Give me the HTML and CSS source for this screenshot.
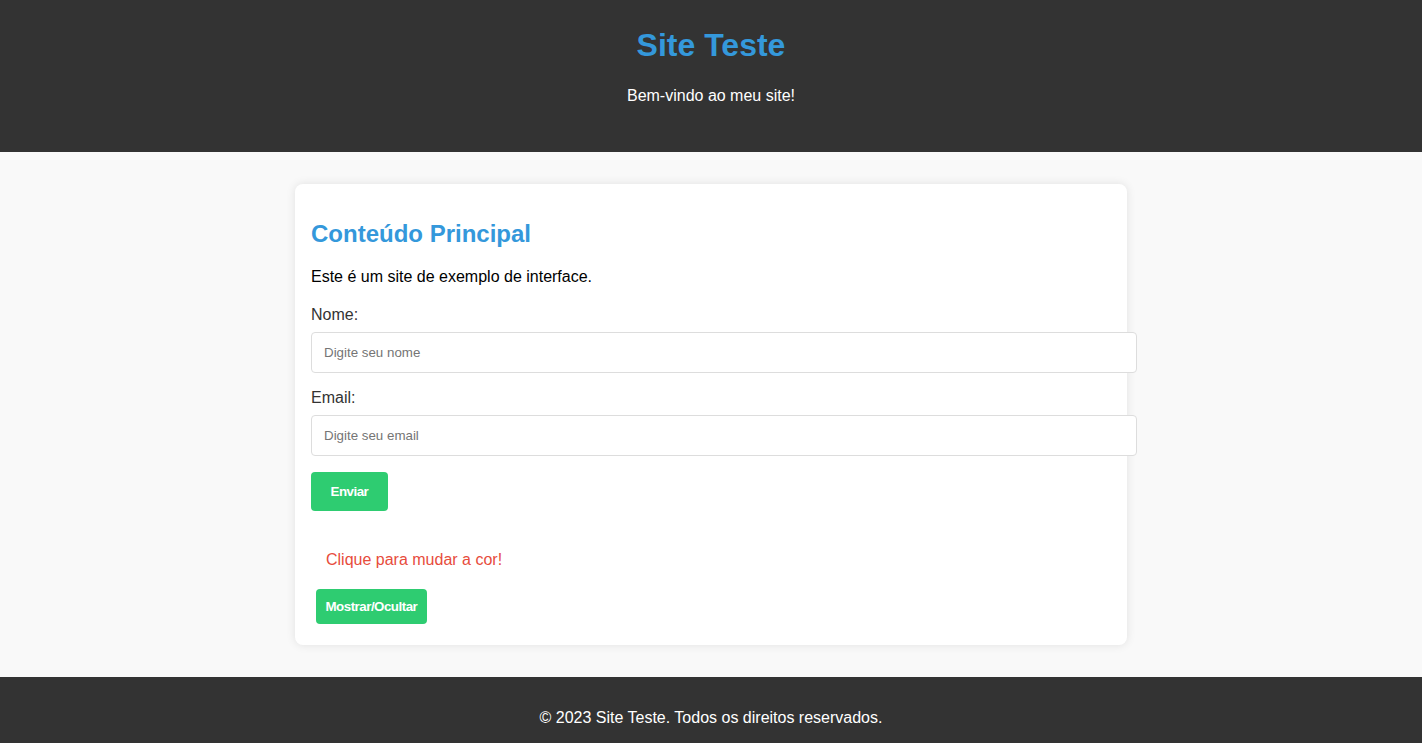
FILE: index.html
```html
<!DOCTYPE html>
<html lang="pt-BR">
<head>
<meta charset="UTF-8">
<title>Site Teste</title>
<link rel="stylesheet" href="styles.css">
</head>
<body>
<header class="site-header">
  <h1 class="site-title">Site Teste</h1>
  <p class="site-subtitle">Bem-vindo ao meu site!</p>
</header>
<main class="site-main">
  <section class="card">
    <h2 class="card-title">Conteúdo Principal</h2>
    <p class="card-text">Este é um site de exemplo de interface.</p>
    <form class="form">
      <label class="form-label" for="nome">Nome:</label>
      <input class="form-input" type="text" id="nome" placeholder="Digite seu nome">
      <label class="form-label" for="email">Email:</label>
      <input class="form-input" type="email" id="email" placeholder="Digite seu email">
      <button class="btn btn-submit" type="button">Enviar</button>
    </form>
    <div class="interactive">
      <p class="color-text">Clique para mudar a cor!</p>
      <button class="btn btn-toggle" type="button">Mostrar/Ocultar</button>
    </div>
  </section>
</main>
<footer class="site-footer">
  <p class="footer-text">© 2023 Site Teste. Todos os direitos reservados.</p>
</footer>
</body>
</html>
```
FILE: styles.css
```css
html, body {
  margin: 0;
  padding: 0;
}
body {
  font-family: "Liberation Sans", Arial, sans-serif;
  font-size: 16px;
  color: #000;
  background: #f9f9f9;
}
.site-header {
  background: #333;
  color: #fff;
  text-align: center;
  padding: 17px 0 31px;
}
.site-title {
  color: #3498db;
  font-size: 32px;
  margin: 10px 0 23px;
}
.site-subtitle {
  margin: 16px 0;
}
.site-main {
  padding: 32px 0;
  background: #f9f9f9;
}
.card {
  max-width: 800px;
  margin: 0 auto;
  padding: 16px;
  background: #fff;
  border-radius: 8px;
  box-shadow: 0 0 10px rgba(0, 0, 0, 0.1);
}
.card-title {
  color: #3498db;
  font-size: 24px;
  margin: 19.92px 0;
}
.card-text {
  margin: 16px 0;
}
.form {
  padding-top: 4px;
}
.form-label {
  display: block;
  color: #333;
  margin-bottom: 8px;
}
.form-input {
  display: block;
  width: 100%;
  padding: 12px;
  border: 1px solid #ddd;
  border-radius: 4px;
  font-family: "Liberation Sans", Arial, sans-serif;
  font-size: 13.333px;
  margin: 0 0 16px;
  background: #fff;
}
.btn {
  display: block;
  background: #2ecc71;
  color: #fff;
  border: none;
  border-radius: 4px;
  font-family: "Liberation Sans", Arial, sans-serif;
  font-size: 13.333px;
  font-weight: bold;
  letter-spacing: -0.5px;
  cursor: pointer;
}
.btn-submit {
  padding: 12px 19.5px;
}
.interactive {
  margin-top: 25px;
  padding: 5px;
}
.color-text {
  color: #e74c3c;
  padding: 10px;
  margin: 0 0 10px;
}
.btn-toggle {
  padding: 10px 9.5px;
}
.site-footer {
  background: #333;
  color: #fff;
  text-align: center;
  padding: 16px 0;
}
.footer-text {
  margin: 16px 0;
}
```
